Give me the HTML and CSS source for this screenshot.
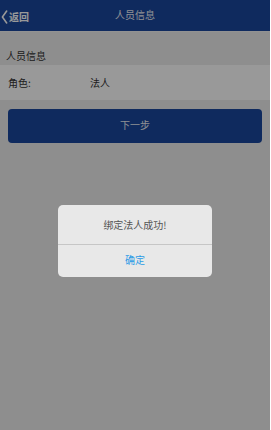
FILE: index.html
```html
<!DOCTYPE html>
<html lang="zh-CN">
<head>
<meta charset="utf-8">
<title>人员信息</title>
<link rel="stylesheet" href="styles.css">
</head>
<body>
<div class="page">
  <header class="topbar">
    <div class="back">
      <svg class="chev" viewBox="0 0 8 16" width="7" height="14"><path d="M6.5 1.2 L1.6 8 L6.5 14.8" fill="none" stroke="#fff" stroke-width="1.8" stroke-linecap="round" stroke-linejoin="round"/></svg>
      <span>返回</span>
    </div>
    <div class="title">人员信息</div>
  </header>
  <div class="section-label">人员信息</div>
  <div class="row">
    <span class="key">角色:</span>
    <span class="val">法人</span>
  </div>
  <div class="btn-wrap">
    <div class="btn">下一步</div>
  </div>
  <div class="mask"></div>
  <div class="dialog">
    <div class="dialog-msg">绑定法人成功!</div>
    <div class="dialog-ok">确定</div>
  </div>
</div>
</body>
</html>
```
FILE: styles.css
```css
html, body {
  margin: 0;
  padding: 0;
  background: #ffffff;
}
body {
  font-family: "Noto Sans CJK SC", "Noto Sans", sans-serif;
  font-size: 10px;
}
.page {
  position: relative;
  width: 270px;
  height: 430px;
  background: #ededed;
  overflow: hidden;
}
.topbar {
  position: relative;
  height: 32px;
  background: #19469d;
  border-bottom: 1px solid #f4f4f4;
  box-sizing: border-box;
  display: flex;
  align-items: center;
  justify-content: center;
}
.back {
  position: absolute;
  left: 1px;
  top: 10px;
  display: flex;
  align-items: center;
  gap: 1px;
  color: #ffffff;
  font-weight: bold;
  font-size: 10px;
  line-height: 14px;
}
.chev {
  display: block;
}
.title {
  color: #eef0f6;
  font-size: 10px;
  line-height: 14px;
  margin-top: -2px;
}
.section-label {
  color: #333333;
  padding: 15px 0 0 6px;
  height: 33px;
  box-sizing: border-box;
  line-height: 18px;
}
.row {
  height: 35px;
  background: #ffffff;
  display: flex;
  align-items: center;
  padding-left: 8px;
  color: #333333;
}
.key {
  width: 82px;
}
.btn-wrap {
  padding: 9px 8px 0 8px;
}
.btn {
  height: 34px;
  background: #19469d;
  border-radius: 4px;
  color: #eef0f6;
  display: flex;
  align-items: center;
  justify-content: center;
  padding-bottom: 3px;
  box-sizing: border-box;
}
.mask {
  position: absolute;
  inset: 0;
  background: rgba(0, 0, 0, 0.4);
}
.dialog {
  position: absolute;
  left: 58px;
  top: 205px;
  width: 154px;
  background: #e8e8e8;
  border-radius: 5px;
  overflow: hidden;
}
.dialog-msg {
  height: 39px;
  display: flex;
  align-items: center;
  justify-content: center;
  color: #555555;
  border-bottom: 1px solid #c6c6c6;
}
.dialog-ok {
  height: 32px;
  display: flex;
  align-items: center;
  justify-content: center;
  color: #2b9be6;
  padding-bottom: 3px;
  box-sizing: border-box;
}
```
